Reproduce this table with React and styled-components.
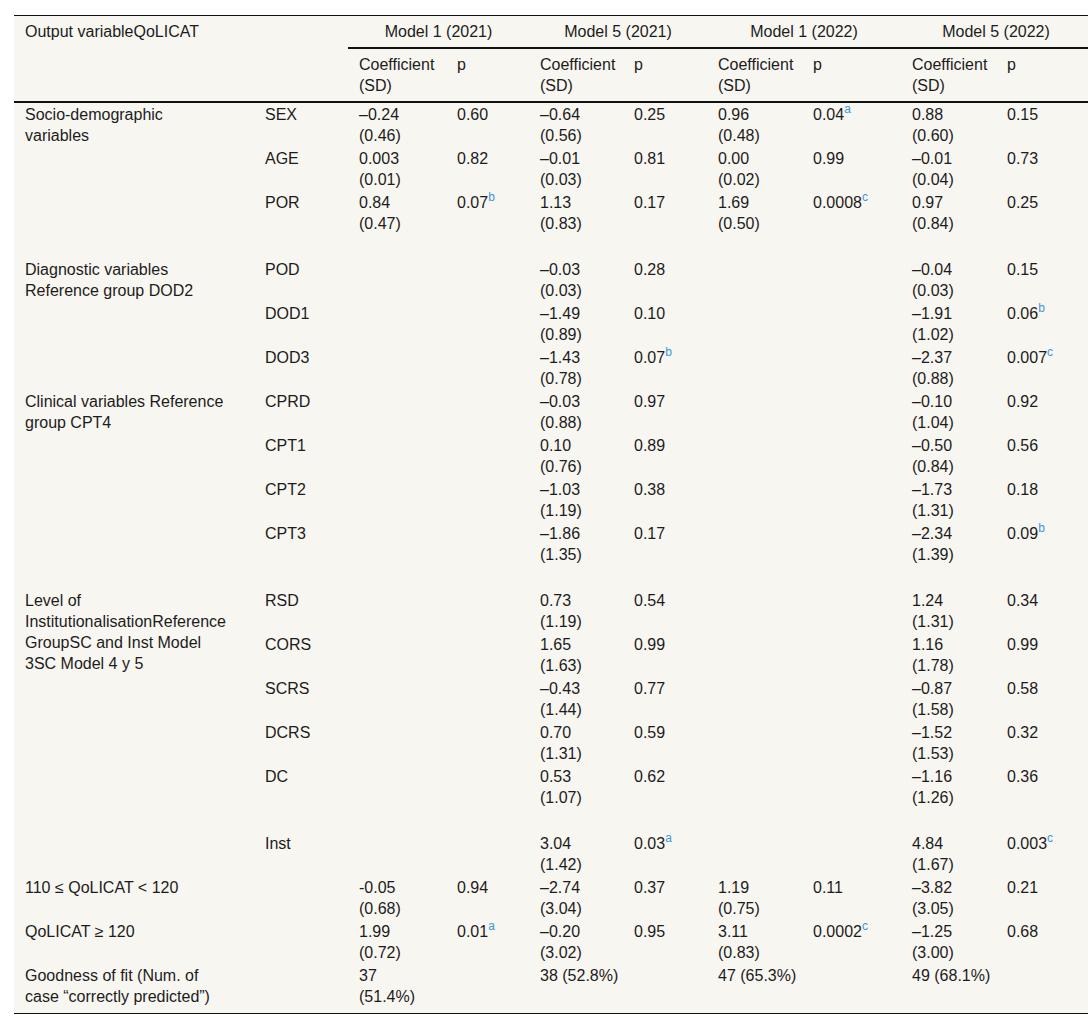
import React from "react";
import styled, { createGlobalStyle } from "styled-components";

//////////// STYLED COMPONENTS /////////////
const GlobalStyle = createGlobalStyle`
  html, body {
    margin: 0;
    padding: 0;
    background: #ffffff;
    font-family: "Liberation Sans", Arial, sans-serif;
  }
`;

const Page = styled.div`
  padding: 15px 0 0 14px;
  width: 1088px;
  box-sizing: border-box;
  overflow: hidden;
`;

const Table = styled.table`
  border-collapse: collapse;
  table-layout: fixed;
  width: 1077px;
  background: #f8f6f1;
  color: #1c1c1c;
  font-size: 16px;
  line-height: 21px;
  border-top: 1px solid #111;
  border-bottom: 1px solid #111;
`;

const Th = styled.th`
  font-weight: normal;
  text-align: ${(p) => (p.$center ? "center" : "left")};
  vertical-align: top;
  padding: 5px 11px;
  border-bottom: ${(p) => (p.$rule ? "2px solid #111" : "none")};
`;

const Td = styled.td`
  vertical-align: top;
  padding: 2px 11px 0;
  padding-right: ${(p) => (p.$label ? "25px" : "11px")};
  tbody > tr:first-child > & {
    padding-top: 1px;
  }
  tbody > tr:last-child > & {
    padding-bottom: 6px;
  }
`;

const SpacerCell = styled.td`
  height: 23px;
  padding: 0;
`;

const Sup = styled.sup`
  color: #3b98d8;
  font-size: 12px;
  line-height: 0;
  vertical-align: 7px;
`;
//////////// END STYLED COMPONENTS /////////////

const M = (c, sd, p, sup) => ({ c, sd, p, sup });

const widths = [240, 94, 98, 83, 94, 84, 95, 99, 95, 95];
const models = ["Model 1 (2021)", "Model 5 (2021)", "Model 1 (2022)", "Model 5 (2022)"];

const rows = [
  {
    group: "Socio-demographic variables", span: 3, v: "SEX",
    m: [M("–0.24", "0.46", "0.60"), M("–0.64", "0.56", "0.25"), M("0.96", "0.48", "0.04", "a"), M("0.88", "0.60", "0.15")],
  },
  { v: "AGE", m: [M("0.003", "0.01", "0.82"), M("–0.01", "0.03", "0.81"), M("0.00", "0.02", "0.99"), M("–0.01", "0.04", "0.73")] },
  { v: "POR", m: [M("0.84", "0.47", "0.07", "b"), M("1.13", "0.83", "0.17"), M("1.69", "0.50", "0.0008", "c"), M("0.97", "0.84", "0.25")] },
  { spacer: 10 },
  {
    group: "Diagnostic variables Reference group DOD2", span: 3, v: "POD",
    m: [null, M("–0.03", "0.03", "0.28"), null, M("–0.04", "0.03", "0.15")],
  },
  { v: "DOD1", m: [null, M("–1.49", "0.89", "0.10"), null, M("–1.91", "1.02", "0.06", "b")] },
  { v: "DOD3", m: [null, M("–1.43", "0.78", "0.07", "b"), null, M("–2.37", "0.88", "0.007", "c")] },
  {
    group: "Clinical variables Reference group CPT4", span: 4, v: "CPRD",
    m: [null, M("–0.03", "0.88", "0.97"), null, M("–0.10", "1.04", "0.92")],
  },
  { v: "CPT1", m: [null, M("0.10", "0.76", "0.89"), null, M("–0.50", "0.84", "0.56")] },
  { v: "CPT2", m: [null, M("–1.03", "1.19", "0.38"), null, M("–1.73", "1.31", "0.18")] },
  { v: "CPT3", m: [null, M("–1.86", "1.35", "0.17"), null, M("–2.34", "1.39", "0.09", "b")] },
  { spacer: 10 },
  {
    group: "Level of InstitutionalisationReference GroupSC and Inst Model 3SC Model 4 y 5", span: 7, v: "RSD",
    m: [null, M("0.73", "1.19", "0.54"), null, M("1.24", "1.31", "0.34")],
  },
  { v: "CORS", m: [null, M("1.65", "1.63", "0.99"), null, M("1.16", "1.78", "0.99")] },
  { v: "SCRS", m: [null, M("–0.43", "1.44", "0.77"), null, M("–0.87", "1.58", "0.58")] },
  { v: "DCRS", m: [null, M("0.70", "1.31", "0.59"), null, M("–1.52", "1.53", "0.32")] },
  { v: "DC", m: [null, M("0.53", "1.07", "0.62"), null, M("–1.16", "1.26", "0.36")] },
  { spacer: 9 },
  { v: "Inst", m: [null, M("3.04", "1.42", "0.03", "a"), null, M("4.84", "1.67", "0.003", "c")] },
  {
    group: "110 ≤ QoLICAT < 120", span: 1, v: "",
    m: [M("-0.05", "0.68", "0.94"), M("–2.74", "3.04", "0.37"), M("1.19", "0.75", "0.11"), M("–3.82", "3.05", "0.21")],
  },
  {
    group: "QoLICAT ≥ 120", span: 1, v: "",
    m: [M("1.99", "0.72", "0.01", "a"), M("–0.20", "3.02", "0.95"), M("3.11", "0.83", "0.0002", "c"), M("–1.25", "3.00", "0.68")],
  },
];

function ModelCells({ data }) {
  if (!data) {
    return (
      <>
        <Td />
        <Td />
      </>
    );
  }
  return (
    <>
      <Td>
        {data.c}
        <br />({data.sd})
      </Td>
      <Td>
        {data.p}
        {data.sup && <Sup>{data.sup}</Sup>}
      </Td>
    </>
  );
}

//////////// REACT COMPONENT /////////////
export default function App() {
  return (
    <Page>
      <GlobalStyle />
      <Table>
        <colgroup>
          {widths.map((w, i) => (
            <col key={i} style={{ width: w }} />
          ))}
        </colgroup>
        <thead>
          <tr>
            <Th colSpan={2}>Output variableQoLICAT</Th>
            {models.map((m) => (
              <Th key={m} colSpan={2} $center $rule>
                {m}
              </Th>
            ))}
          </tr>
          <tr>
            <Th colSpan={2} $rule />
            {models.map((m) => (
              <React.Fragment key={m}>
                <Th $rule>Coefficient (SD)</Th>
                <Th $rule>p</Th>
              </React.Fragment>
            ))}
          </tr>
        </thead>
        <tbody>
          {rows.map((r, i) =>
            r.spacer ? (
              <tr key={i}>
                <SpacerCell colSpan={r.spacer} />
              </tr>
            ) : (
              <tr key={i}>
                {r.group && (
                  <Td $label rowSpan={r.span} colSpan={r.v ? 1 : 2}>
                    {r.group}
                  </Td>
                )}
                {r.v && <Td>{r.v}</Td>}
                {r.m.map((d, j) => (
                  <ModelCells key={j} data={d} />
                ))}
              </tr>
            )
          )}
          <tr>
            <Td $label>Goodness of fit (Num. of case “correctly predicted”)</Td>
            <Td />
            <Td>37 (51.4%)</Td>
            <Td />
            <Td colSpan={2}>38 (52.8%)</Td>
            <Td colSpan={2}>47 (65.3%)</Td>
            <Td colSpan={2}>49 (68.1%)</Td>
          </tr>
        </tbody>
      </Table>
    </Page>
  );
}
//////////// END REACT COMPONENT /////////////
